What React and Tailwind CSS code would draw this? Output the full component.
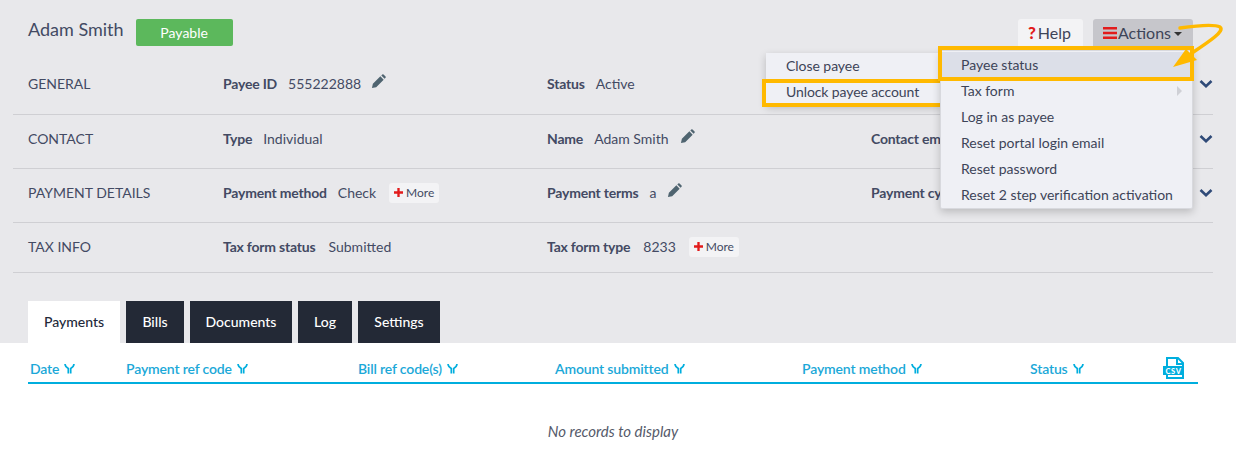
const Pencil = () => (
  <svg width="15" height="15" viewBox="0 0 16 16" className="shrink-0">
    <path d="M1 15l1-4.500 8-8 3.500 3.500-8 8zM11 1.500l1-1a1 1 0 0 1 1.400 0l2.100 2.100a1 1 0 0 1 0 1.400l-1 1z" fill="#4f6470" />
  </svg>
);

const Chevron = () => (
  <svg width="14" height="10" viewBox="0 0 14 10"><path d="M1.500 2l5.500 5.200L12.500 2" fill="none" stroke="#2f4a78" strokeWidth="2.600" /></svg>
);

const More = () => (
  <span className="ml-[13px] inline-flex h-5 w-[50px] items-center justify-center gap-[3px] rounded-[3px] bg-[#f3f3f5] text-[12px] leading-none">
    <svg width="9" height="9" viewBox="0 0 10 10"><path d="M3.700 0h2.600v3.700H10v2.600H6.300V10H3.700V6.300H0V3.700h3.700z" fill="#e21b1b" /></svg>
    <span className="mt-[1px]">More</span>
  </span>
);

const Filter = () => (
  <svg width="11" height="11" viewBox="0 0 11 11" className="ml-[5px] shrink-0">
    <path d="M1 1c.2 2.600 1.700 3.600 3.300 4.500V10.500M10 1c-.2 2.600-1.700 3.600-3.300 4.500V10.500" fill="none" stroke="#00aede" strokeWidth="1.700" />
  </svg>
);

const Field = ({ label, value, children, gap = "ml-[11px]" }) => (
  <div className="flex items-center whitespace-nowrap">
    <span className="font-bold tracking-[-0.2px]">{label}</span>
    <span className={gap}>{value}</span>
    {children}
  </div>
);

const Row = ({ name, a, b, c, chevron, h = "h-[54px] pb-[6px]" }) => (
  <div className={`flex items-center border-b border-[#cfcfd3] pl-[15px] ${h}`}>
    <div className="w-[195px] shrink-0">{name}</div>
    <div className="w-[324px] shrink-0">{a}</div>
    <div className="w-[324px] shrink-0">{b}</div>
    <div className="w-[324px] shrink-0">{c}</div>
    {chevron && <div className="ml-[4px] flex"><Chevron /></div>}
  </div>
);

const Tab = ({ children, w, active }) => (
  <div className={`flex h-[42px] items-center justify-center pb-[2px] text-[14px] font-medium ${w} ${active ? "bg-white text-[#23293a]" : "bg-[#232936] text-white"}`}>
    {children}
  </div>
);

const Th = ({ children, w }) => (
  <div className={`flex shrink-0 items-center ${w}`}>
    <span className="tracking-[-0.15px]">{children}</span>
    <Filter />
  </div>
);

const Item = ({ children, active }) => (
  <div className={`relative flex h-[26px] items-center pb-[1px] pl-[19px] ${active ? "bg-[#dcdfe8]" : ""}`}>{children}</div>
);

export default function App() {
  return (
    <div className="relative h-[462px] w-[1236px] overflow-hidden bg-white font-['Lato',sans-serif] text-[14px] text-[#434a63]">
      <div className="h-[343px] bg-[#e8e8eb]">
        <div className="flex h-[57px] items-start pl-[28px] pt-[18px]">
          <div className="text-[18px] leading-[22px]">Adam Smith</div>
          <div className="ml-[12px] mt-[1px] flex h-[27px] w-[97px] items-center justify-center rounded-[2px] bg-[#5cb85c] text-[14px] text-white">Payable</div>
          <div className="ml-auto mr-[43px] mt-[1px] flex gap-[10px]">
            <div className="flex h-[29px] w-[65px] items-center justify-center rounded-t-[3px] bg-[#f3f3f5] pb-[1px] text-[16px] text-[#3d4458]">
              <span className="mr-[2px] ml-[-2px] text-[17px] font-black text-[#e21b1b]">?</span>Help
            </div>
            <div className="flex h-[29px] w-[100px] items-center justify-center rounded-t-[3px] bg-[#c6c6cb] pb-[2px] text-[16px] text-[#3d4458]">
              <svg width="14" height="12" viewBox="0 0 14 12" className="ml-[-1px] mr-[1px] mt-[1px]"><path d="M0 0h14v2.400H0zM0 4.800h14v2.400H0zM0 9.600h14V12H0z" fill="#e21b1b" /></svg>
              Actions
              <svg width="8" height="4" viewBox="0 0 8 4" className="ml-[3px] mt-[3px]"><path d="M0 0h8L4 4z" fill="#333" /></svg>
            </div>
          </div>
        </div>

        <div className="ml-[13px] w-[1200px]">
          <Row
            name="GENERAL"
            a={<Field label="Payee ID" value="555222888"><span className="ml-[10px] -mt-[4px]"><Pencil /></span></Field>}
            b={<Field label="Status" value="Active" />}
            chevron
            h="h-[58px] pb-[4px]"
          />
          <Row
            name="CONTACT"
            a={<Field label="Type" value="Individual" />}
            b={<Field label="Name" value="Adam Smith"><span className="ml-[11px] -mt-[4px]"><Pencil /></span></Field>}
            c={<Field label="Contact email" value="" />}
            chevron
          />
          <Row
            name="PAYMENT DETAILS"
            a={<Field label="Payment method" value="Check"><More /></Field>}
            b={<Field label="Payment terms" value="a"><span className="ml-[11px] -mt-[4px]"><Pencil /></span></Field>}
            c={<Field label="Payment cycle" value="" />}
            chevron
          />
          <Row
            name="TAX INFO"
            a={<Field label="Tax form status" value="Submitted" gap="ml-[13px]" />}
            b={<Field label="Tax form type" value="8233" gap="ml-[13px]"><More /></Field>}
            h="h-[50px] pb-[2px]"
          />
        </div>

        <div className="ml-[28px] mt-[28px] flex gap-[6px]">
          <Tab w="w-[92px]" active>Payments</Tab>
          <Tab w="w-[58px]">Bills</Tab>
          <Tab w="w-[102px]">Documents</Tab>
          <Tab w="w-[54px]">Log</Tab>
          <Tab w="w-[82px]">Settings</Tab>
        </div>
      </div>

      <div className="ml-[28px] flex h-[41px] w-[1170px] items-center border-b-2 border-[#00aede] pl-[2px] pt-[11px] font-semibold text-[#1ba8d8]">
        <Th w="w-[96px]">Date</Th>
        <Th w="w-[232px]">Payment ref code</Th>
        <Th w="w-[197px]">Bill ref code(s)</Th>
        <Th w="w-[247px]">Amount submitted</Th>
        <Th w="w-[228px]">Payment method</Th>
        <Th w="w-[133px]">Status</Th>
        <svg width="24" height="24" viewBox="0 0 24 24" className="-mt-[1px] shrink-0">
          <path d="M4 10V2h11l5 5v15H4v-3" fill="none" stroke="#00aede" strokeWidth="2" />
          <path d="M14 2v6h6" fill="none" stroke="#00aede" strokeWidth="2" />
          <rect x="0" y="10" width="21" height="9" fill="#00aede" />
          <text x="10.500" y="17.500" textAnchor="middle" fontSize="7.500" fontWeight="900" fill="#fff" fontFamily="Lato, sans-serif" letterSpacing=".6">CSV</text>
        </svg>
      </div>

      <div className="mt-[36px] pr-[10px] text-center text-[15px] italic text-[#555a6a]">No records to display</div>

      {/* left dropdown */}
      <div className="absolute left-[766px] top-[53px] w-[176px] bg-[#eff0f5] text-[#3d4458] shadow-[0_3px_8px_rgba(0,0,0,0.2)]">
        <div className="flex h-[26px] items-center pb-[1px] pl-[20px] tracking-[-0.05px]">Close payee</div>
        <div className="flex h-[26px] items-center pb-[1px] pl-[20px] tracking-[-0.1px]">Unlock payee account</div>
      </div>
      <div className="absolute left-[762px] top-[79px] h-[28px] w-[182px] border-[4px] border-[#ffb900]" />

      {/* right dropdown */}
      <div className="absolute left-[940px] top-[50px] w-[253px] rounded-b-[2px] border border-[#d8d9de] bg-[#eff0f5] pt-[1px] text-[#3d4458] shadow-[0_3px_8px_rgba(0,0,0,0.2)]">
        <div className="pl-[1px]">
          <Item active>Payee status</Item>
          <Item>
            Tax form
            <span className="absolute right-[10px] top-[8px] h-0 w-0 border-y-[5px] border-l-[5px] border-y-transparent border-l-[#cfd0d6]" />
          </Item>
          <Item>Log in as payee</Item>
          <Item>Reset portal login email</Item>
          <Item>Reset password</Item>
          <Item>Reset 2 step verification activation</Item>
        </div>
      </div>
      <div className="absolute left-[938px] top-[46px] h-[35px] w-[256px] border-[4px] border-[#ffb900]" />

      {/* callout arrow */}
      <svg width="70" height="60" viewBox="0 0 70 60" className="absolute left-[1170px] top-[15px]">
        <path d="M10 13C24 11 44 9 50 12C55 16 40 26 22 38" fill="none" stroke="#ffb900" strokeWidth="3.500" strokeLinecap="round" />
        <path d="M3 52L16 34L27 45z" fill="#ffb900" />
      </svg>
    </div>
  );
}
